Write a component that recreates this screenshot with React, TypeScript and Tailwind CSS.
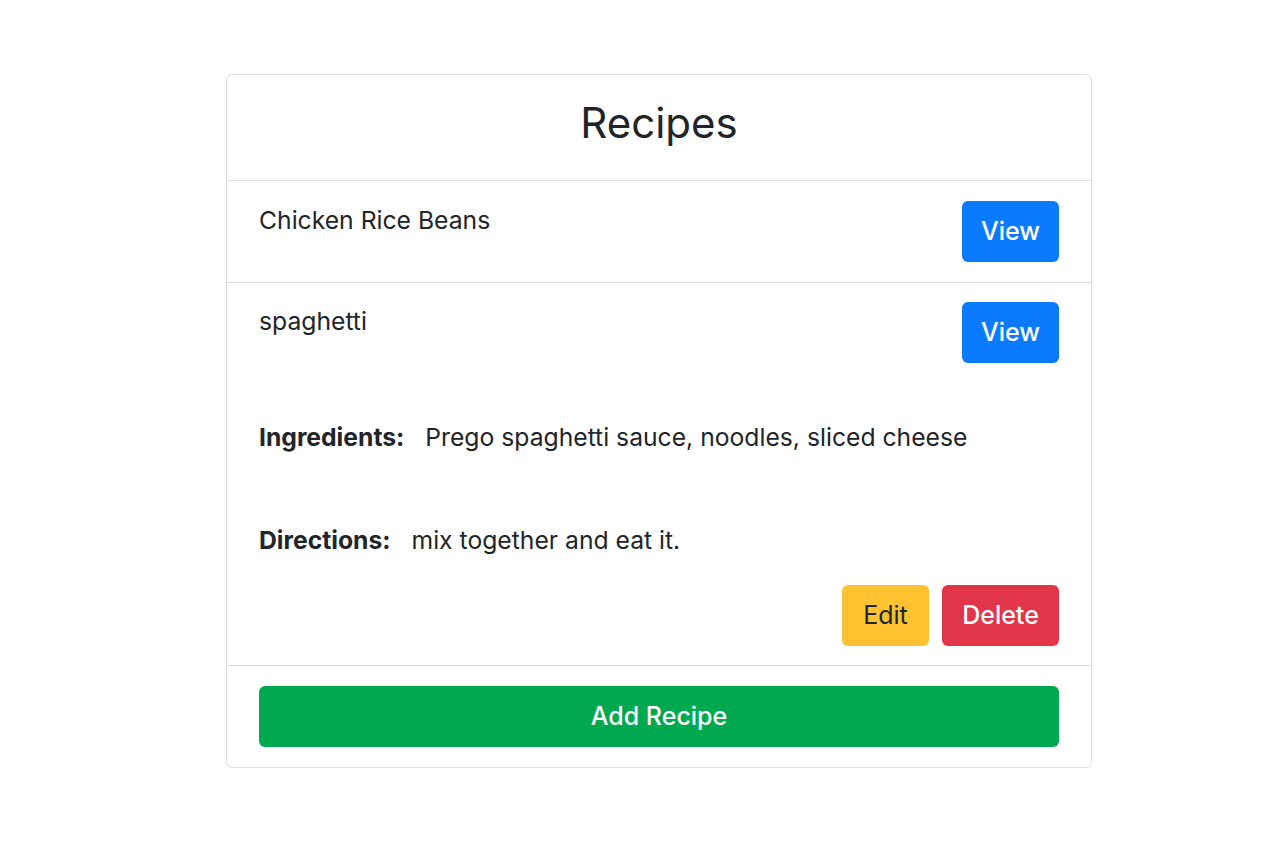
import React from "react";

export default function App() {
  return (
    <div
      className="w-[1280px] h-[853px] bg-white text-[#212529]"
      style={{ fontFamily: "Inter, 'Noto Sans', sans-serif" }}
    >
      <div className="pt-[74px] flex justify-center">
        <div className="ml-[38px] w-[866px] border border-[#dedede] rounded-[6px]">
          <div className="h-[106px] flex items-center justify-center border-b border-[#dedede]">
            <h1 className="text-[42px] leading-none font-normal mt-[-10px]">Recipes</h1>
          </div>
          <div className="border-b border-[#dedede] px-[32px] pt-[20px] pb-[20px]">
            <div className="flex justify-between items-start">
              <div className="text-[24.7px] leading-[38px]">Chicken Rice Beans</div>
              <button className="h-[61px] w-[97px] rounded-[6px] bg-[#0a7bff] text-white text-[25px] font-medium">View</button>
            </div>
          </div>
          <div className="border-b border-[#dedede] px-[32px] pt-[19px] pb-[19px]">
            <div className="flex justify-between items-start">
              <div className="text-[24.7px] leading-[38px]">spaghetti</div>
              <button className="h-[61px] w-[97px] rounded-[6px] bg-[#0a7bff] text-white text-[25px] font-medium">View</button>
            </div>
            <div className="mt-[55px] text-[24.7px] leading-[38px]">
              <span className="font-bold">Ingredients:</span>
              <span className="ml-[21px]">Prego spaghetti sauce, noodles, sliced cheese</span>
            </div>
            <div className="mt-[65px] text-[24.7px] leading-[38px]">
              <span className="font-bold">Directions:</span>
              <span className="ml-[21px]">mix together and eat it.</span>
            </div>
            <div className="mt-[26px] flex justify-end gap-[13px]">
              <button className="h-[61px] w-[87px] rounded-[6px] bg-[#fec12f] text-[#212529] text-[25px]">Edit</button>
              <button className="h-[61px] w-[117px] rounded-[6px] bg-[#e2354a] text-white text-[25px] font-medium">Delete</button>
            </div>
          </div>
          <div className="px-[32px] pt-[20px] pb-[20px]">
            <button className="h-[61px] w-full rounded-[6px] bg-[#00a84f] text-white text-[25px] font-medium">Add Recipe</button>
          </div>
        </div>
      </div>
    </div>
  );
}
